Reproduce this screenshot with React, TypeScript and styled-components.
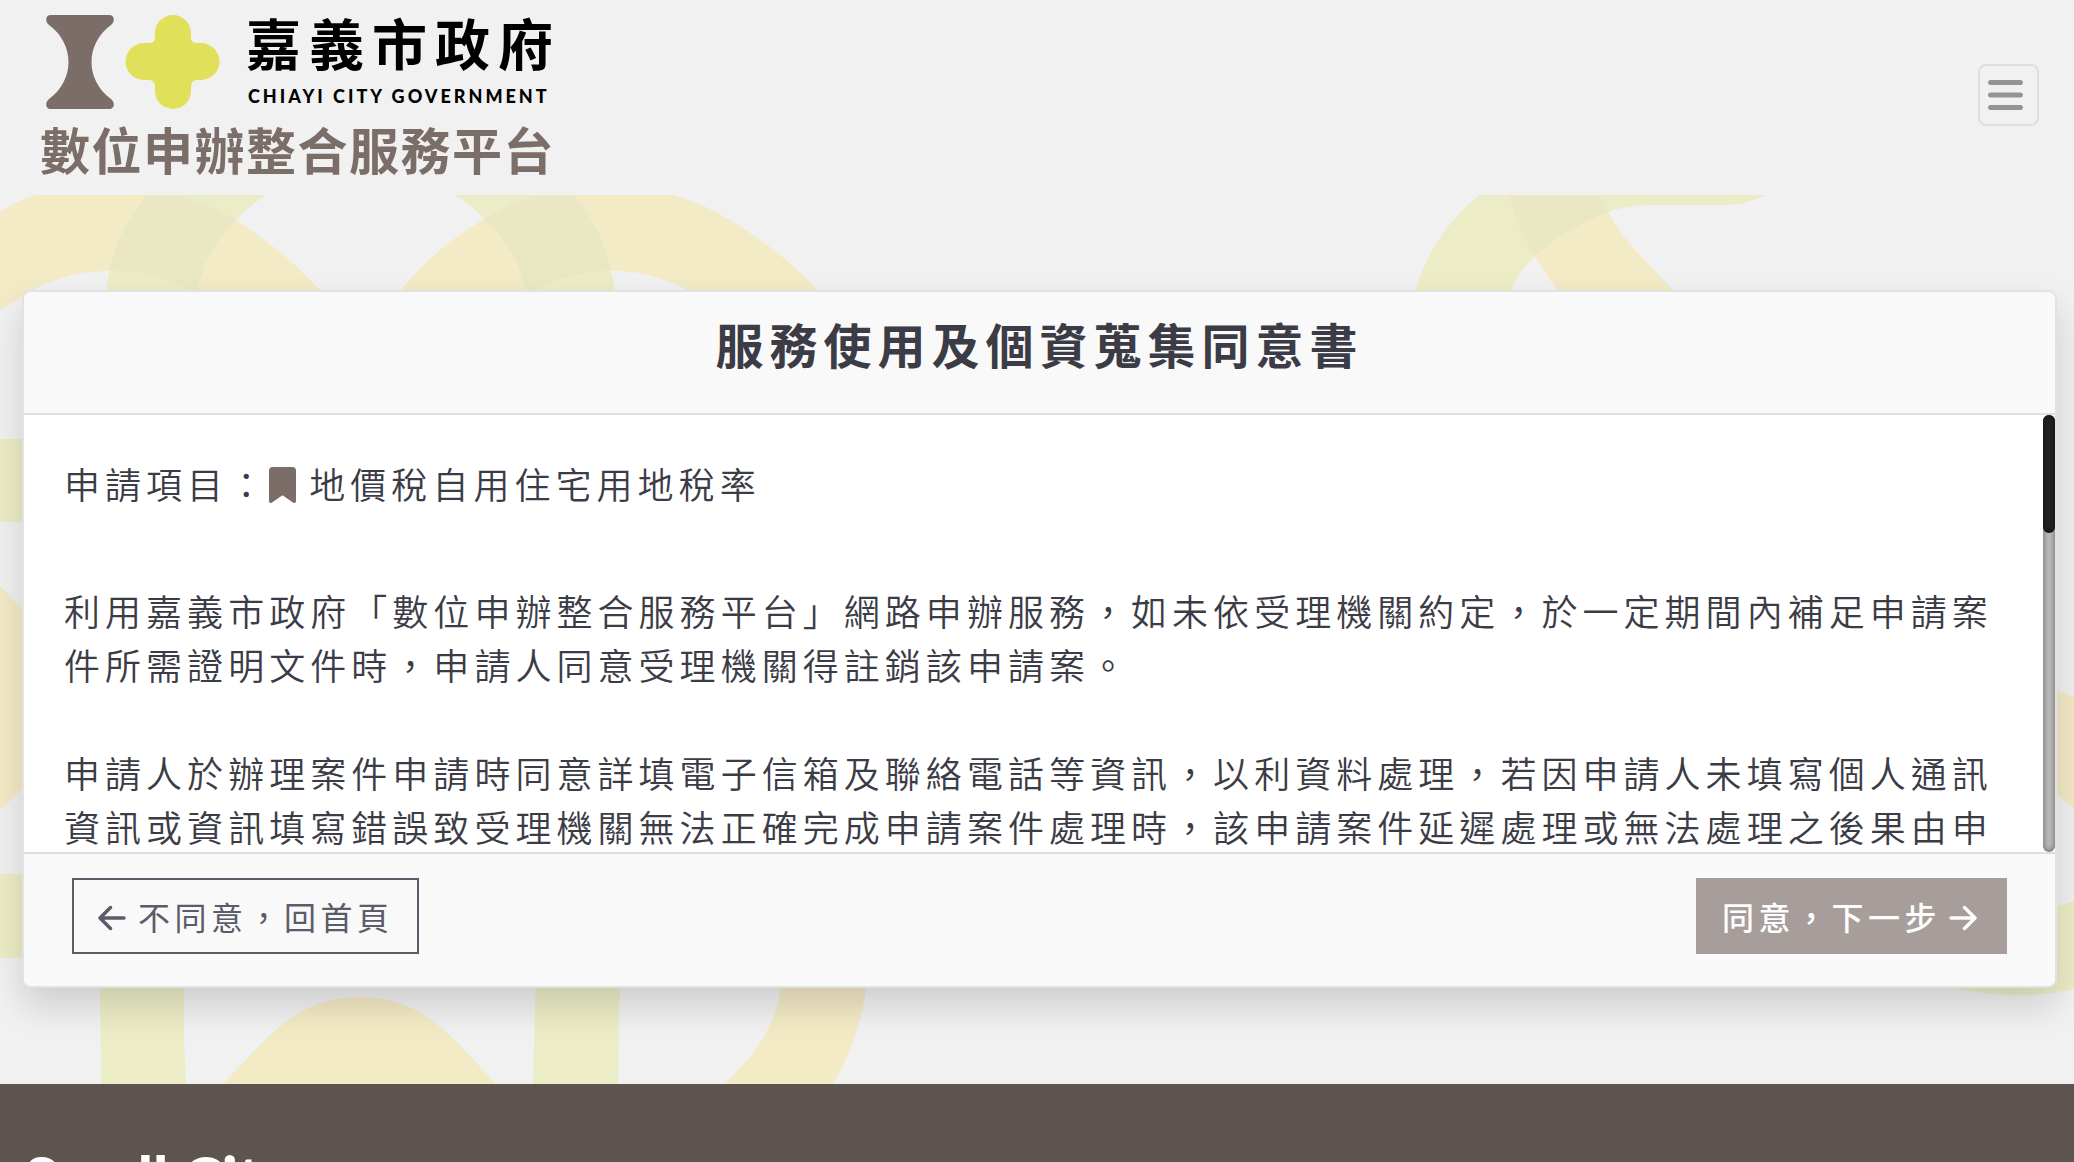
import React from "react";
import styled, { createGlobalStyle } from "styled-components";
import { FaBars, FaBookmark } from "react-icons/fa6";

const GlobalStyle = createGlobalStyle`
  * { box-sizing: border-box; }
  body {
    margin: 0;
    background: #f1f1f1;
    color: #3c3c46;
    font-family: "Noto Sans CJK TC", "Noto Sans", sans-serif;
    font-size: 36px;
    line-height: 54px;
  }
`;

const Page = styled.div`
  height: 100vh;
  overflow: hidden;
  display: flex;
  flex-direction: column;
`;

const Header = styled.header`
  display: flex;
  align-items: flex-start;
  justify-content: space-between;
  flex: none;
  height: 195px;
  padding: 6px 35px 0 40px;
`;

const Brand = styled.a`
  display: flex;
  flex-direction: column;
  gap: 10px;
  color: #7b6d68;
  text-decoration: none;
`;

const BrandRow = styled.span`
  display: flex;
  align-items: flex-end;
  gap: 24px;
  padding-left: 6px;
`;

const Emblem = styled.svg`
  width: 176px;
  height: 96px;
`;

const CityName = styled.span`
  display: flex;
  flex-direction: column;
  gap: 6px;
  color: #000;
`;

const CityZh = styled.span`
  font-size: 55px;
  line-height: 70px;
  font-weight: 700;
  letter-spacing: 8px;
`;

const CityEn = styled.span`
  padding-left: 2px;
  font-family: Lato, "Liberation Sans", sans-serif;
  font-size: 18px;
  line-height: 28px;
  font-weight: 900;
  letter-spacing: 3px;
`;

const PlatformName = styled.span`
  font-size: 50px;
  line-height: 56px;
  font-weight: 700;
  letter-spacing: 0.03em;
`;

const MenuButton = styled.button`
  display: flex;
  align-items: center;
  width: 61px;
  height: 62px;
  margin-top: 58px;
  padding: 0 8px;
  border: 2px solid #dedede;
  border-radius: 8px;
  background: transparent;
  color: #949494;

  svg {
    width: 35px;
    height: 40px;
  }
`;

const Stage = styled.main`
  position: relative;
  flex: none;
  padding: 95px 17px 96px 22px;
`;

const Pattern = styled.svg`
  position: absolute;
  top: 0;
  left: 0;
  width: 100%;
  height: 100%;
`;

const Card = styled.section`
  position: relative;
  display: flex;
  flex-direction: column;
  border: 2px solid #e2e2e2;
  border-radius: 9px;
  background: #fff;
  box-shadow: 0 18px 36px rgba(0, 0, 0, 0.15);
  overflow: hidden;
`;

const CardHeader = styled.header`
  padding: 15px 0 34px;
  background: #f9f9f9;
  border-bottom: 2px solid #dedede;
`;

const Title = styled.h1`
  margin: 0;
  text-align: center;
  font-size: 48px;
  line-height: 72px;
  font-weight: 700;
  letter-spacing: 6px;
`;

const CardBody = styled.div`
  display: flex;
  height: 437px;
`;

const Terms = styled.div`
  flex: 1;
  overflow-y: auto;
  scrollbar-width: none;
  padding: 41px 38px 0 40px;
  font-weight: 350;
  letter-spacing: 0.14em;
`;

const ScrollTrack = styled.div`
  flex: none;
  width: 12px;
  border-radius: 10px;
  background: #bcbcbc;
  box-shadow: inset 0 0 6px rgba(0, 0, 0, 0.5);
`;

const ScrollThumb = styled.div`
  height: 27%;
  border-radius: 10px;
  background: #222;
  box-shadow: inset 0 0 6px rgba(0, 0, 0, 0.5);
`;

const ItemLine = styled.p`
  margin: 0 0 73px;
`;

const Mark = styled(FaBookmark)`
  width: 27px;
  height: 36px;
  vertical-align: -4px;
  color: #7b6d68;
`;

const Paragraph = styled.p`
  margin: 0 0 54px;
`;

const CardFooter = styled.footer`
  display: flex;
  justify-content: space-between;
  padding: 24px 48px 32px;
  background: #f9f9f9;
  border-top: 2px solid #dedede;
`;

const ActionButton = styled.button<{ $filled?: boolean }>`
  display: flex;
  align-items: center;
  gap: 8px;
  height: 76px;
  padding: 0 24px;
  border: 2px solid ${(p) => (p.$filled ? "#a79e9b" : "#5b5b69")};
  background: ${(p) => (p.$filled ? "#a79e9b" : "transparent")};
  color: ${(p) => (p.$filled ? "#fdfdfd" : "#5b5b69")};
  font-family: inherit;
  font-size: 32px;
  line-height: 48px;
  font-weight: ${(p) => (p.$filled ? 500 : 400)};
  letter-spacing: 0.14em;
`;

const ArrowIcon = styled.svg`
  width: 28px;
  height: 32px;
  margin-right: 4px;
  fill: none;
  stroke: currentColor;
  stroke-width: 3.4;
  stroke-linecap: round;
  stroke-linejoin: round;
`;

const Footer = styled.footer`
  flex: 1 0 auto;
  padding: 54px 24px 0;
  background: #5d5450;
  color: #fff;
`;

const Slogan = styled.p`
  margin: 0;
  font-family: Lato, "Liberation Sans", sans-serif;
  font-size: 60px;
  line-height: 80px;
  font-weight: 900;
`;

function CityEmblem() {
  return (
    <Emblem viewBox="0 0 176 96" aria-hidden="true">
      <path
        fill="#7b6d68"
        d="M5 1 H63 C69 1 69 8 65 11 C39 30 39 66 65 85 C69 88 69 95 63 95 H5 C-1 95 -1 88 3 85 C29 66 29 30 3 11 C-1 8 -1 1 5 1 Z"
      />
      <path
        fill="#e0e05a"
        d="M109 19 A18 18 0 0 1 145 19 V23 C145 27 147 29 151 29 H155 A18 18 0 0 1 155 66 H151 C147 66 145 69 145 73 V77 A18 18 0 0 1 109 77 V73 C109 69 107 66 103 66 H98 A18 18 0 0 1 98 29 H103 C107 29 109 27 109 23 Z"
      />
    </Emblem>
  );
}

const yellowBands = [
  "M0 17 Q22 2 48 -4 Q110 -22 178 0 Q208 9 236 25 Q284 56 320 95 L340 130 H0 Z M24 101 Q60 76 109 76 Q160 76 194 97 L220 130 H0 V115 Z",
  "M380 130 L401 95 Q436 52 483 25 Q510 7 545 -2 Q610 -20 675 0 Q712 12 741 32 Q788 62 817 95 L840 130 H710 L688 96 Q655 76 612 76 Q568 76 533 96 L510 130 Z",
  "M1510 0 H1600 Q1612 28 1632 52 L1673 95 L1700 130 H1570 L1558 95 Q1517 42 1510 0 Z",
  "M0 391 L22 414 H30 V590 L22 594 L0 615 Z",
  "M2050 492 L2074 502 V613 L2050 594 Z",
  "M223 889 C265 846 294 802 360 802 C426 802 455 846 496 889 Z",
  "M782 780 C780 825 758 858 724 889 H833 Q862 840 868 780 Z",
];

const greenBands = [
  "M147 0 H266 Q248 12 236 25 Q200 60 195 110 H105 Q108 45 147 0 Z",
  "M454 0 H574 Q612 45 616 110 H529 Q522 58 483 23 Q472 10 454 0 Z",
  "M1479 0 H1766 Q1745 10 1725 10 H1652 Q1625 10 1606 18 Q1565 34 1536 60 Q1514 80 1506 110 H1412 Q1425 45 1479 0 Z",
  "M0 244 H30 V327 H0 Z",
  "M0 679 H30 V763 H0 Z",
  "M100 780 H184 V830 Q184 860 186 889 H101 Z",
  "M536 780 H620 L618 889 H533 Z",
  "M1930 785 Q2000 810 2074 794 V706 L2050 714 Z",
];

function BackgroundPattern() {
  return (
    <Pattern viewBox="0 0 2074 889" preserveAspectRatio="none" aria-hidden="true">
      <clipPath id="green-bands">
        {greenBands.map((d) => (
          <path key={d} d={d} />
        ))}
      </clipPath>
      <g fill="#f3eac6" fillRule="evenodd">
        {yellowBands.map((d) => (
          <path key={d} d={d} />
        ))}
      </g>
      <g fill="#ecedc6">
        {greenBands.map((d) => (
          <path key={d} d={d} />
        ))}
      </g>
      <g fill="#eae7c5" fillRule="evenodd" clipPath="url(#green-bands)">
        {yellowBands.map((d) => (
          <path key={d} d={d} />
        ))}
      </g>
    </Pattern>
  );
}

export default function App() {
  return (
    <>
      <GlobalStyle />
      <Page>
        <Header>
          <Brand href="#">
            <BrandRow>
              <CityEmblem />
              <CityName>
                <CityZh>嘉義市政府</CityZh>
                <CityEn>CHIAYI CITY GOVERNMENT</CityEn>
              </CityName>
            </BrandRow>
            <PlatformName>數位申辦整合服務平台</PlatformName>
          </Brand>
          <MenuButton type="button" aria-label="選單">
            <FaBars />
          </MenuButton>
        </Header>
        <Stage>
          <BackgroundPattern />
          <Card>
            <CardHeader>
              <Title>服務使用及個資蒐集同意書</Title>
            </CardHeader>
            <CardBody>
              <Terms tabIndex={0}>
                <ItemLine>
                  申請項目：<Mark aria-hidden="true" /> 地價稅自用住宅用地稅率
                </ItemLine>
                <Paragraph>
                  利用嘉義市政府「數位申辦整合服務平台」網路申辦服務，如未依受理機關約定，於一定期間內補足申請案件所需證明文件時，申請人同意受理機關得註銷該申請案。
                </Paragraph>
                <Paragraph>
                  申請人於辦理案件申請時同意詳填電子信箱及聯絡電話等資訊，以利資料處理，若因申請人未填寫個人通訊資訊或資訊填寫錯誤致受理機關無法正確完成申請案件處理時，該申請案件延遲處理或無法處理之後果由申
                </Paragraph>
              </Terms>
              <ScrollTrack aria-hidden="true">
                <ScrollThumb />
              </ScrollTrack>
            </CardBody>
            <CardFooter>
              <ActionButton type="button">
                <ArrowIcon viewBox="0 0 28 32" aria-hidden="true">
                  <path d="M26 18 H2 M12.5 7.5 L2 18 L12.5 28.5" />
                </ArrowIcon>
                不同意，回首頁
              </ActionButton>
              <ActionButton type="button" $filled disabled>
                同意，下一步
                <ArrowIcon viewBox="0 0 28 32" aria-hidden="true">
                  <path d="M2 18 H26 M15.5 7.5 L26 18 L15.5 28.5" />
                </ArrowIcon>
              </ActionButton>
            </CardFooter>
          </Card>
        </Stage>
        <Footer>
          <Slogan>Small City</Slogan>
        </Footer>
      </Page>
    </>
  );
}
